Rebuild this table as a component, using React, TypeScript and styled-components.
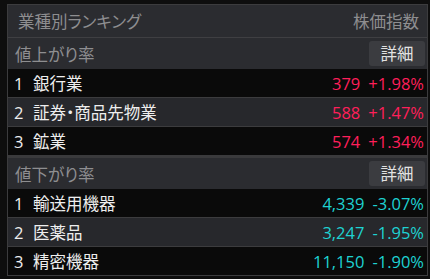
import React from "react";
import styled, { createGlobalStyle } from "styled-components";

const GlobalStyle = createGlobalStyle`
  html, body {
    margin: 0;
    padding: 0;
    background: #0e0e0e;
  }
  body {
    font-family: "Open Sans", "Noto Sans CJK JP", sans-serif;
    font-feature-settings: "palt";
  }
`;

const Page = styled.div`
  padding: 4px 2px 0 7px;
  width: 430px;
  height: 279px;
  box-sizing: border-box;
  background: #0e0e0e;
`;

const Panel = styled.div`
  border: 1px solid #3c3c3e;
  display: flex;
  flex-direction: column;
`;

const Header = styled.div`
  height: 32px;
  display: flex;
  align-items: center;
  justify-content: space-between;
  padding: 0 8px 0 10px;
  background: #2b2c30;
  border-bottom: 1px solid #3f3f42;
  color: #8e8e90;
  font-size: 16.5px;
`;

const Section = styled.div<{ $first?: boolean }>`
  border-top: ${(p) => (p.$first ? "none" : "3px solid #3a3a3c")};
`;

const SectionHead = styled.div`
  height: 31px;
  display: flex;
  align-items: center;
  justify-content: space-between;
  padding: 0 2px 0 7px;
  background: #2b2c30;
  color: #8e8e90;
  font-size: 16.5px;
`;

const DetailButton = styled.button`
  height: 25px;
  width: 56px;
  border: none;
  border-radius: 3px;
  background: #3b3c40;
  color: #e2e2e2;
  font-family: inherit;
  font-feature-settings: "palt";
  font-size: 16.5px;
  padding: 0;
  line-height: 25px;
`;

const Row = styled.div<{ $alt?: boolean }>`
  height: 28px;
  display: flex;
  align-items: center;
  padding: 0 3px 0 6px;
  background: ${(p) => (p.$alt ? "#27282c" : "#0a0a0a")};
  color: #eeeeee;
  font-size: 16.5px;
  & + & {
    border-top: 1px solid #3c3c3e;
  }
`;

const Rank = styled.span`
  width: 19px;
`;

const Name = styled.span`
  flex: 1;
`;

const Value = styled.span<{ $up: boolean }>`
  display: flex;
  gap: 8px;
  color: ${(p) => (p.$up ? "#ff1f5a" : "#1ed2d2")};
`;

type Item = { name: string; price: string; change: string };

const gainers: Item[] = [
  { name: "銀行業", price: "379", change: "+1.98%" },
  { name: "証券・商品先物業", price: "588", change: "+1.47%" },
  { name: "鉱業", price: "574", change: "+1.34%" },
];

const losers: Item[] = [
  { name: "輸送用機器", price: "4,339", change: "-3.07%" },
  { name: "医薬品", price: "3,247", change: "-1.95%" },
  { name: "精密機器", price: "11,150", change: "-1.90%" },
];

function RankSection(props: { title: string; items: Item[]; up: boolean; first?: boolean }) {
  const { title, items, up, first } = props;
  return (
    <Section $first={first}>
      <SectionHead>
        <span>{title}</span>
        <DetailButton>詳細</DetailButton>
      </SectionHead>
      {items.map((item, i) => (
        <Row key={item.name} $alt={i === 1}>
          <Rank>{i + 1}</Rank>
          <Name>{item.name}</Name>
          <Value $up={up}>
            <span>{item.price}</span>
            <span>{item.change}</span>
          </Value>
        </Row>
      ))}
    </Section>
  );
}

export default function App() {
  return (
    <>
      <GlobalStyle />
      <Page>
        <Panel>
          <Header>
            <span>業種別ランキング</span>
            <span>株価指数</span>
          </Header>
          <RankSection title="値上がり率" items={gainers} up first />
          <RankSection title="値下がり率" items={losers} up={false} />
        </Panel>
      </Page>
    </>
  );
}
